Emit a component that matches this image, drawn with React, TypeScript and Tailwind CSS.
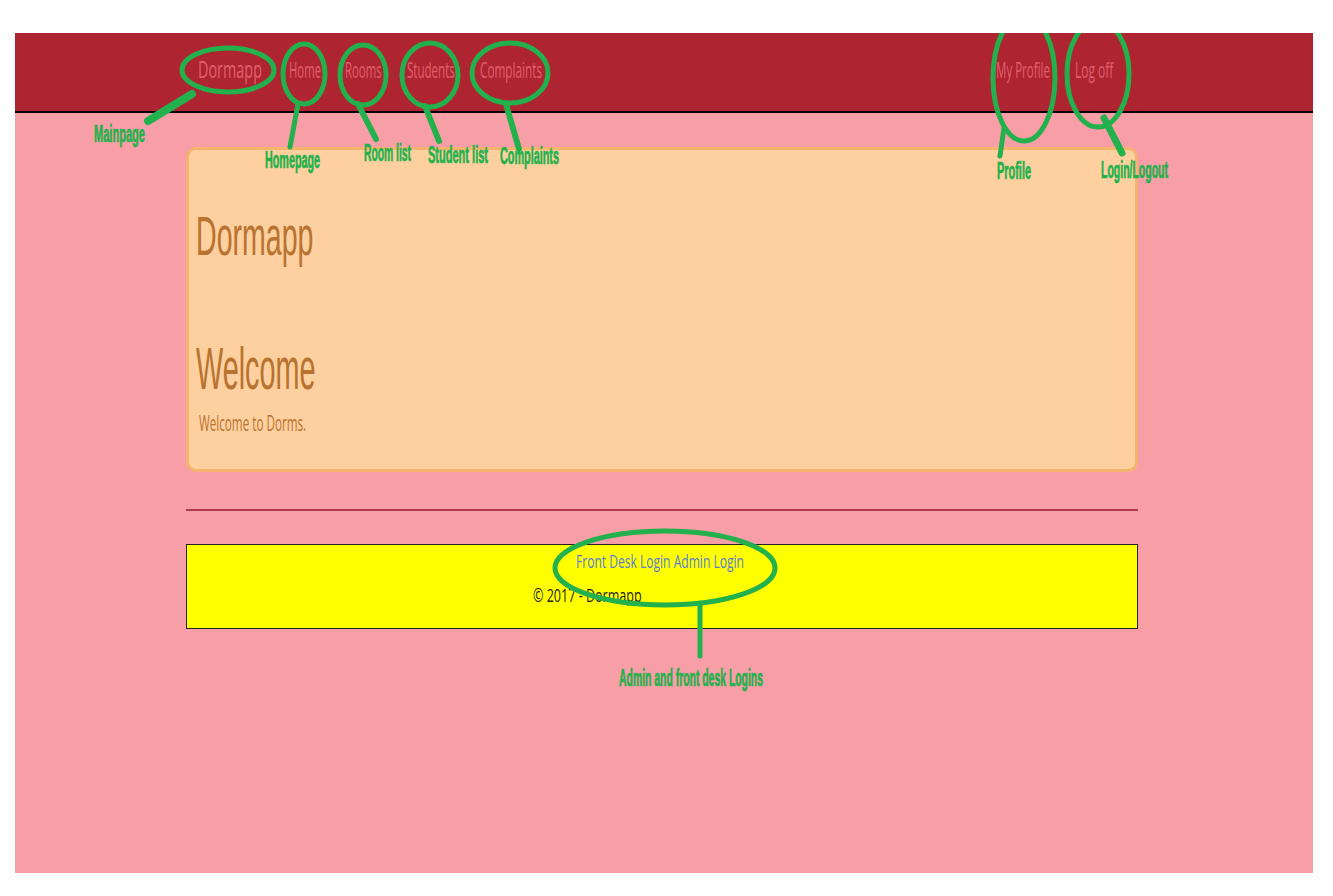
import React from "react"

const openSans = { fontFamily: '"Open Sans", "Liberation Sans", sans-serif' }
const libSans = { fontFamily: '"Liberation Sans", Arial, sans-serif' }

const NavLink = ({ label, width, scale }: { label: string; width: string; scale: string }) => (
  <div className={`${width} shrink-0 text-[21px] leading-none text-[#e0606d]`}>
    <span className={`inline-block origin-left whitespace-nowrap ${scale}`}>{label}</span>
  </div>
)

const Annotations = () => {
  const green = "#22b14c"
  const labels: [string, number, number, number][] = [
    ["Mainpage", 94, 142, 51],
    ["Homepage", 265, 168, 55],
    ["Room list", 364, 161, 47],
    ["Student list", 428, 163, 60],
    ["Complaints", 500, 164, 59],
    ["Profile", 997, 179, 34],
    ["Login/Logout", 1101, 178, 67],
    ["Admin and front desk Logins", 619, 686, 144],
  ]
  return (
    <svg className="pointer-events-none absolute inset-0" width="1333" height="896" viewBox="0 0 1333 896">
      <defs>
        <clipPath id="panel">
          <rect x="15" y="33" width="1298" height="840" />
        </clipPath>
      </defs>
      <g clipPath="url(#panel)" fill="none" stroke={green} strokeLinecap="round">
        <ellipse cx="228" cy="70" rx="46" ry="22" strokeWidth="5" />
        <ellipse cx="304" cy="74" rx="21" ry="30" strokeWidth="5" />
        <ellipse cx="363" cy="75" rx="23" ry="30" strokeWidth="5" />
        <ellipse cx="430" cy="75" rx="28" ry="32" strokeWidth="5" />
        <ellipse cx="510" cy="73" rx="38" ry="30" strokeWidth="5" />
        <ellipse cx="1024" cy="78" rx="31" ry="63" strokeWidth="5" />
        <ellipse cx="1098" cy="74" rx="31" ry="53" strokeWidth="5" />
        <ellipse cx="665" cy="568" rx="110" ry="37" strokeWidth="5" />
        <line x1="192" y1="94" x2="148" y2="121" strokeWidth="8" />
        <line x1="298" y1="104" x2="290" y2="147" strokeWidth="5" />
        <line x1="358" y1="104" x2="376" y2="139" strokeWidth="6" />
        <line x1="425" y1="106" x2="439" y2="141" strokeWidth="6" />
        <line x1="506" y1="104" x2="519" y2="149" strokeWidth="6" />
        <line x1="1004" y1="128" x2="1000" y2="156" strokeWidth="5" />
        <line x1="1104" y1="118" x2="1122" y2="153" strokeWidth="7" />
        <line x1="700" y1="603" x2="700" y2="656" strokeWidth="5" />
      </g>
      <g
        fill={green}
        stroke={green}
        strokeWidth="0.7"
        style={{ fontFamily: '"Liberation Sans", Arial, sans-serif', fontWeight: 700 }}
      >
        {labels.map(([t, x, y, w]) => (
          <text key={t} x={x} y={y} fontSize="23" textLength={w} lengthAdjust="spacingAndGlyphs">
            {t}
          </text>
        ))}
      </g>
    </svg>
  )
}

export default function App() {
  return (
    <div className="relative h-[896px] w-[1333px] overflow-hidden bg-white pl-[15px] pt-[33px]">
      <div className="h-[840px] w-[1298px] bg-[#f89ea7]" style={openSans}>
        <nav className="h-[80px] border-b-2 border-black bg-[#ae2431]">
          <div className="ml-[171px] flex w-[952px] items-baseline pt-[24px]">
            <div className="ml-[12px] w-[91px] shrink-0 text-[24px] leading-none text-[#e0606d]">
              <span className="inline-block origin-left scale-x-[0.6] whitespace-nowrap">Dormapp</span>
            </div>
            <NavLink label="Home" width="w-[56px]" scale="scale-x-[0.54]" />
            <NavLink label="Rooms" width="w-[62px]" scale="scale-x-[0.54]" />
            <NavLink label="Students" width="w-[73px]" scale="scale-x-[0.55]" />
            <NavLink label="Complaints" width="w-[80px]" scale="scale-x-[0.56]" />
            <div className="flex-1" />
            <NavLink label="My Profile" width="w-[79px]" scale="scale-x-[0.55]" />
            <NavLink label="Log off" width="w-[63px]" scale="scale-x-[0.57]" />
          </div>
        </nav>

        <main className="ml-[171px] w-[952px]">
          <div className="mt-[34px] h-[325px] rounded-[10px] border-[3px] border-[#f4b36e] bg-[#fecf9f] pl-[7px] text-[#b8732f]">
            <h1 className="mt-[58px] text-[56px] leading-none" style={libSans}>
              <span className="inline-block origin-left scale-x-[0.51] whitespace-nowrap">Dormapp</span>
            </h1>
            <h2 className="mt-[75px] text-[60px] leading-none" style={libSans}>
              <span className="inline-block origin-left scale-x-[0.48] whitespace-nowrap">Welcome</span>
            </h2>
            <p className="ml-[3px] mt-[12px] text-[22px] leading-none">
              <span className="inline-block origin-left scale-x-[0.53] whitespace-nowrap">Welcome to Dorms.</span>
            </p>
          </div>

          <hr className="mt-[37px] border-t-2 border-[#b2394a]" />

          <footer className="mt-[33px] h-[85px] border-[1.5px] border-[#222] bg-[#ffff00]">
            <div className="ml-[389px] mt-[7px] text-[18px] leading-none text-[#5b7fd0]">
              <span className="inline-block origin-left scale-x-[0.67] whitespace-nowrap">
                <a>Front Desk Login</a> <a>Admin Login</a>
              </span>
            </div>
            <p className="ml-[346px] mt-[16px] text-[19px] leading-none text-[#222]">
              <span className="inline-block origin-left scale-x-[0.66] whitespace-nowrap">© 2017 - Dormapp</span>
            </p>
          </footer>
        </main>
      </div>
      <Annotations />
    </div>
  )
}
